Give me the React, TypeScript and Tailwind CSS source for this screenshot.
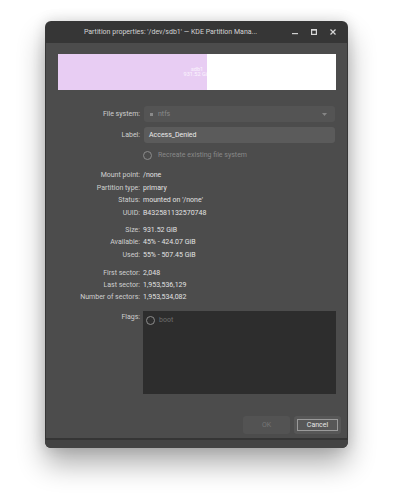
import React from 'react';

const font = { fontFamily: 'Roboto, "Noto Sans", sans-serif' };

interface InfoRowProps {
  label: string;
  value: string;
}

const InfoRow: React.FC<InfoRowProps> = ({ label, value }) => (
  <div className="flex h-[12.4px] items-center">
    <div className="w-[82px] text-right text-[#cfcfcf]">{label}</div>
    <div className="ml-[3px] text-[#e2e2e2]">{value}</div>
  </div>
);

const RadioDot: React.FC = () => (
  <span className="inline-block w-[9px] h-[9px] rounded-full border border-[#8c8c8c]" />
);

export default function App() {
  return (
    <div className="w-[394px] h-[500px] bg-white pt-[21px] pl-[45px]" style={font}>
      {/* Fenster */}
      <div className="w-[303px] h-[427px] rounded-[6px] bg-[#363636] flex flex-col overflow-hidden shadow-[0_16px_28px_rgba(0,0,0,0.32),0_0_14px_rgba(0,0,0,0.14)]">
        {/* Titelleiste */}
        <div className="h-[22px] flex items-center shrink-0">
          <div className="w-[251px] text-center text-[7px] text-[#d4d4d4] whitespace-nowrap">
            Partition properties: '/dev/sdb1' — KDE Partition Mana...
          </div>
          <div className="flex items-center">
            <svg width="6" height="6" viewBox="0 0 6 6" className="ml-[-4px]">
              <rect x="0" y="4" width="6" height="1.2" fill="#cfcfcf" />
            </svg>
            <svg width="6" height="6" viewBox="0 0 6 6" className="ml-[13px]">
              <rect x="0.6" y="0.6" width="4.8" height="4.8" fill="none" stroke="#d8d8d8" strokeWidth="1.2" />
              <rect x="0" y="0" width="6" height="1.6" fill="#d8d8d8" />
            </svg>
            <svg width="6" height="6" viewBox="0 0 6 6" className="ml-[13px]">
              <path d="M0.5 0.5 L5.5 5.5 M5.5 0.5 L0.5 5.5" stroke="#d8d8d8" strokeWidth="1.2" />
            </svg>
          </div>
        </div>

        {/* Inhalt */}
        <div className="h-[395px] mx-[1px] bg-[#4c4c4c] pt-[11px] pl-[12px] pr-[11px] text-[7px] flex flex-col">
          {/* Partitionsbalken */}
          <div className="relative h-[36px] bg-white flex">
            <div className="w-[149px] bg-[#e8cdf3]" />
            <div className="absolute inset-0 flex flex-col items-center justify-center text-[5.5px] leading-[5.5px] text-white/80">
              <span>sdb1</span>
              <span>931.52 GiB</span>
            </div>
          </div>

          {/* Dateisystem */}
          <div className="mt-[16px] flex items-center">
            <div className="w-[82px] text-right text-[#cfcfcf]">File system:</div>
            <div className="ml-[4px] w-[191px] h-[16px] rounded-[3px] bg-[#545454] flex items-center pl-[6px] pr-[8px]">
              <span className="w-[3px] h-[3px] bg-[#8a8a8a]" />
              <span className="ml-[5px] text-[#8a8a8a]">ntfs</span>
              <svg width="5" height="3" viewBox="0 0 5 3" className="ml-auto">
                <path d="M0 0 L5 0 L2.5 3 Z" fill="#858585" />
              </svg>
            </div>
          </div>

          {/* Bezeichnung */}
          <div className="mt-[5px] flex items-center">
            <div className="w-[82px] text-right text-[#cfcfcf]">Label:</div>
            <div className="ml-[4px] w-[191px] h-[16px] rounded-[3px] bg-[#5b5b5b] flex items-center pl-[5px] text-[#ececec]">
              Access_Denied
            </div>
          </div>

          <div className="mt-[6px] h-[12px] flex items-center pl-[85px]">
            <RadioDot />
            <span className="ml-[6px] text-[#888888]">Recreate existing file system</span>
          </div>

          <div className="mt-[8.5px]">
            <InfoRow label="Mount point:" value="/none" />
            <InfoRow label="Partition type:" value="primary" />
            <InfoRow label="Status:" value="mounted on '/none'" />
            <InfoRow label="UUID:" value="B432581132570748" />
          </div>

          <div className="mt-[5px]">
            <InfoRow label="Size:" value="931.52 GiB" />
            <InfoRow label="Available:" value="45% - 424.07 GiB" />
            <InfoRow label="Used:" value="55% - 507.45 GiB" />
          </div>

          <div className="mt-[5.5px]">
            <InfoRow label="First sector:" value="2,048" />
            <InfoRow label="Last sector:" value="1,953,536,129" />
            <InfoRow label="Number of sectors:" value="1,953,534,082" />
          </div>

          {/* Flags */}
          <div className="mt-[7px] flex">
            <div className="w-[82px] text-right text-[#cfcfcf] pt-[1px]">Flags:</div>
            <div className="ml-[3px] w-[193px] h-[83px] bg-[#2d2d2d] pt-[4px] pl-[3px]">
              <div className="flex items-center">
                <RadioDot />
                <span className="ml-[4px] text-[#6e6e6e]">boot</span>
              </div>
            </div>
          </div>

          {/* Schaltflächen */}
          <div className="mt-[22px] flex justify-end gap-[4px] mr-[-5px]">
            <button className="w-[47px] h-[18px] rounded-[3px] bg-[#535353] text-[#767676]">
              OK
            </button>
            <button className="w-[47px] h-[18px] rounded-[3px] bg-[#575757] flex items-center justify-center p-[3px]">
              <span className="w-full h-full border border-[#9a9a9a] flex items-center justify-center text-[#e6e6e6]">
                Cancel
              </span>
            </button>
          </div>
        </div>

        {/* Unterer Rahmen */}
        <div className="flex-1 border-t-[2px] border-[#353535] bg-[#434343]" />
      </div>
    </div>
  );
}
